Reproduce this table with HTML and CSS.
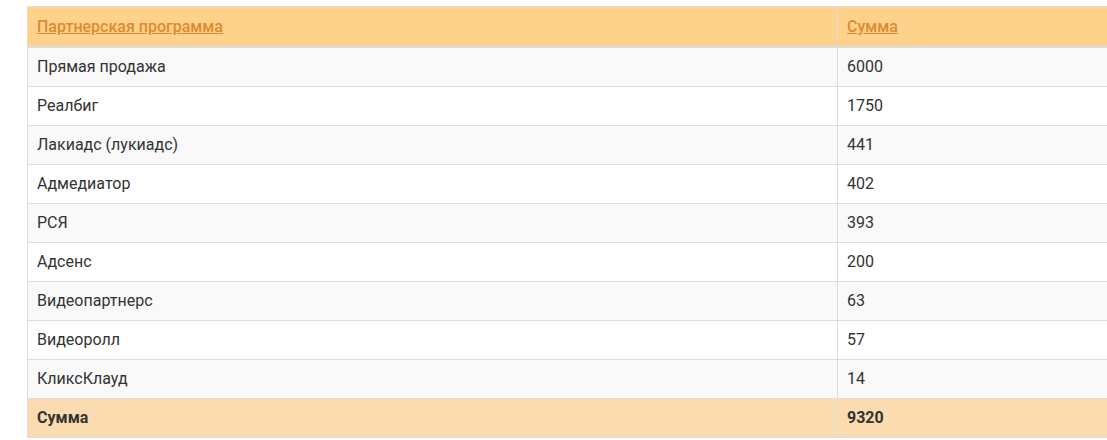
FILE: index.html
```html
<!DOCTYPE html>
<html lang="ru">
<head>
<meta charset="utf-8">
<link rel="stylesheet" href="styles.css">
</head>
<body>
<div class="wrap">
<table class="tbl">
  <thead>
    <tr><th class="c1"><a href="#">Партнерская программа</a></th><th class="c2"><a href="#">Сумма</a></th></tr>
  </thead>
  <tbody>
    <tr><td>Прямая продажа</td><td>6000</td></tr>
    <tr><td>Реалбиг</td><td>1750</td></tr>
    <tr><td>Лакиадс (лукиадс)</td><td>441</td></tr>
    <tr><td>Адмедиатор</td><td>402</td></tr>
    <tr><td>РСЯ</td><td>393</td></tr>
    <tr><td>Адсенс</td><td>200</td></tr>
    <tr><td>Видеопартнерс</td><td>63</td></tr>
    <tr><td>Видеоролл</td><td>57</td></tr>
    <tr><td>КликсКлауд</td><td>14</td></tr>
  </tbody>
  <tfoot>
    <tr><td>Сумма</td><td>9320</td></tr>
  </tfoot>
</table>
</div>
</body>
</html>
```
FILE: styles.css
```css
html, body {
  margin: 0;
  padding: 0;
  background: #fff;
  overflow: hidden;
}
.wrap {
  padding: 6px 0 0 27px;
  width: 1200px;
}
.tbl {
  border-collapse: collapse;
  width: 1120px;
  table-layout: fixed;
  font-family: Roboto, "Liberation Sans", sans-serif;
  font-size: 16px;
  line-height: 22px;
  color: #333;
}
.tbl th, .tbl td {
  border: 1px solid #ddd;
  padding: 8px 9px;
  text-align: left;
  vertical-align: middle;
}
.c1 { width: 791px; }
.tbl thead th {
  background: #ffd28b;
  border-bottom: 2px solid #ddd;
  font-weight: 500;
  padding-top: 9px;
  padding-bottom: 8px;
}
.tbl thead a {
  color: #de8a2e;
  text-decoration: underline;
}
.tbl tbody tr:nth-child(odd) td { background: #f9f9f9; }
.tbl tbody tr:nth-child(even) td { background: #fff; }
.tbl tfoot td {
  background: #fadcb0;
  font-weight: 700;
}
```
